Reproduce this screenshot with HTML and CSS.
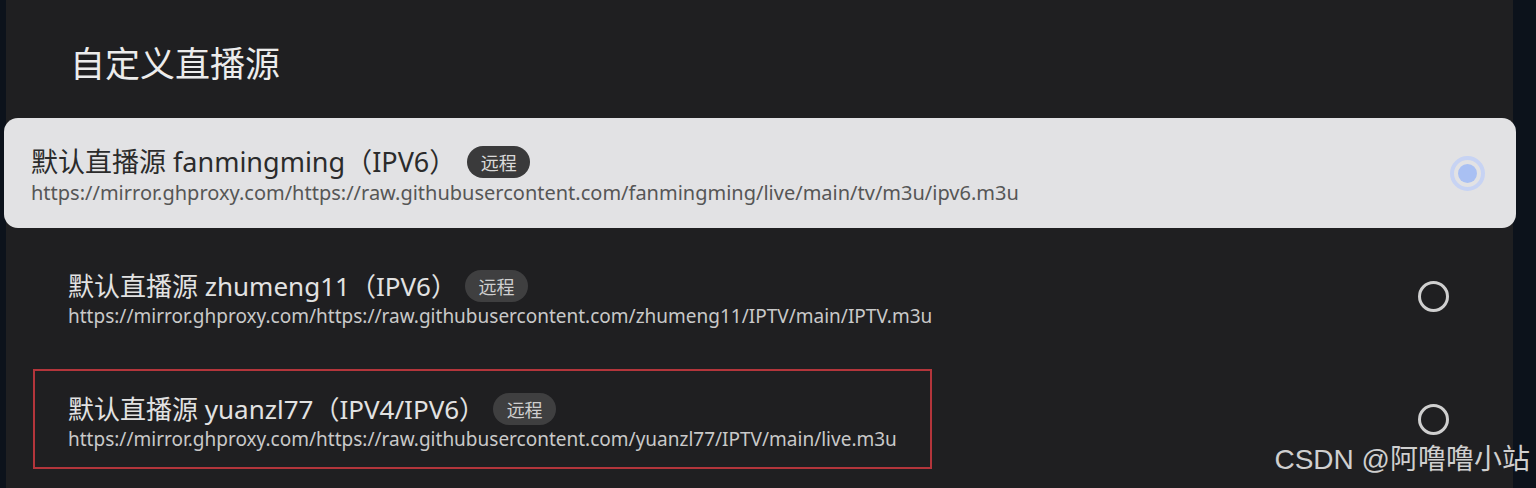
FILE: index.html
```html
<!DOCTYPE html>
<html lang="zh-CN">

<head>
  <meta charset="UTF-8">
  <title>自定义直播源</title>
  <meta name="viewport" content="width=device-width, initial-scale=1">
  <link rel="stylesheet" href="styles.css">
</head>

<body>
  <div class="panel">
    <h1 class="panel-title">自定义直播源</h1>

    <ul class="source-list">
      <li class="source active">
        <div class="info">
          <div class="name">默认直播源 fanmingming（IPV6）<span class="tag">远程</span></div>
          <div class="url">https://mirror.ghproxy.com/https://raw.githubusercontent.com/fanmingming/live/main/tv/m3u/ipv6.m3u</div>
        </div>
        <span class="radio checked"></span>
      </li>
      <li class="source">
        <div class="info">
          <div class="name">默认直播源 zhumeng11（IPV6）<span class="tag">远程</span></div>
          <div class="url">https://mirror.ghproxy.com/https://raw.githubusercontent.com/zhumeng11/IPTV/main/IPTV.m3u</div>
        </div>
        <span class="radio"></span>
      </li>
      <li class="source marked">
        <div class="info">
          <div class="name">默认直播源 yuanzl77（IPV4/IPV6）<span class="tag">远程</span></div>
          <div class="url">https://mirror.ghproxy.com/https://raw.githubusercontent.com/yuanzl77/IPTV/main/live.m3u</div>
        </div>
        <span class="radio"></span>
      </li>
    </ul>
  </div>

  <div class="watermark">CSDN @阿噜噜小站</div>
</body>

</html>
```

FILE: styles.css
```css
body {
  margin: 0;
  padding: 0;
  background: #0c121b;
  font-family: "Noto Sans", "Noto Sans CJK SC", sans-serif;
  height: 488px;
  overflow: hidden;
}

.panel {
  margin: 0 23px 0 6px;
  height: 488px;
  background: #1f1f21;
}

.panel-title {
  margin: 0;
  padding: 40px 0 0 64px;
  height: 78px;
  font-size: 35px;
  line-height: 44px;
  font-weight: 400;
  color: #ececec;
  font-family: "Noto Sans CJK SC", sans-serif;
}

.source-list {
  list-style: none;
  margin: 0;
  padding: 0;
}

.source {
  display: flex;
  align-items: center;
  justify-content: space-between;
  margin-bottom: 23px;
}

.source .info {
  box-sizing: border-box;
  width: 899px;
  height: 100px;
  margin-left: 27px;
  padding: 22px 0 0 33px;
  border: 2px solid transparent;
}

.source .name {
  display: flex;
  align-items: center;
  font-size: 26px;
  line-height: 30px;
  color: #e2e2e2;
  white-space: nowrap;
}

.source .url {
  margin-top: 2px;
  font-size: 19px;
  line-height: 24px;
  color: #c9c9c9;
  white-space: nowrap;
}

.tag {
  display: inline-flex;
  align-items: center;
  justify-content: center;
  margin-left: 8px;
  width: 63px;
  height: 32px;
  border-radius: 16px;
  background: #3f3f40;
  color: #cfcfcf;
  font-size: 18px;
  font-family: "Noto Sans CJK SC", sans-serif;
}

.radio {
  box-sizing: border-box;
  width: 31px;
  height: 31px;
  margin-right: 64px;
  border: 3px solid #cfcfcf;
  border-radius: 50%;
}

/* focused / selected card */
.source.active {
  margin: 0 -3px 18px -2px;
  height: 110px;
  background: #e2e2e4;
  border-radius: 14px;
}

.source.active .info {
  width: auto;
  height: auto;
  margin-left: 0;
  padding: 4px 0 0 27px;
  border: none;
}

.source.active .name {
  font-size: 27px;
  line-height: 32px;
  color: #2b2b2b;
}

.source.active .url {
  margin-top: 3px;
  font-size: 20px;
  color: #565656;
}

.source.active .tag {
  margin-left: 11px;
  background: #3a3a3b;
  color: #dadada;
}

.radio.checked {
  position: relative;
  width: 35px;
  height: 35px;
  margin-right: 31px;
  border: 4px solid #c7d3f3;
}

.radio.checked::after {
  content: "";
  position: absolute;
  left: 50%;
  top: 50%;
  width: 19px;
  height: 19px;
  margin: -9.5px 0 0 -9.5px;
  border-radius: 50%;
  background: #a9c0f3;
}

/* red annotation box */
.source.marked .info {
  border-color: #b3353b;
}

.watermark {
  position: absolute;
  right: 6px;
  bottom: 11px;
  font-size: 28px;
  color: #cfcfcf;
  font-family: "Liberation Sans", "Noto Sans CJK SC", sans-serif;
}
```
